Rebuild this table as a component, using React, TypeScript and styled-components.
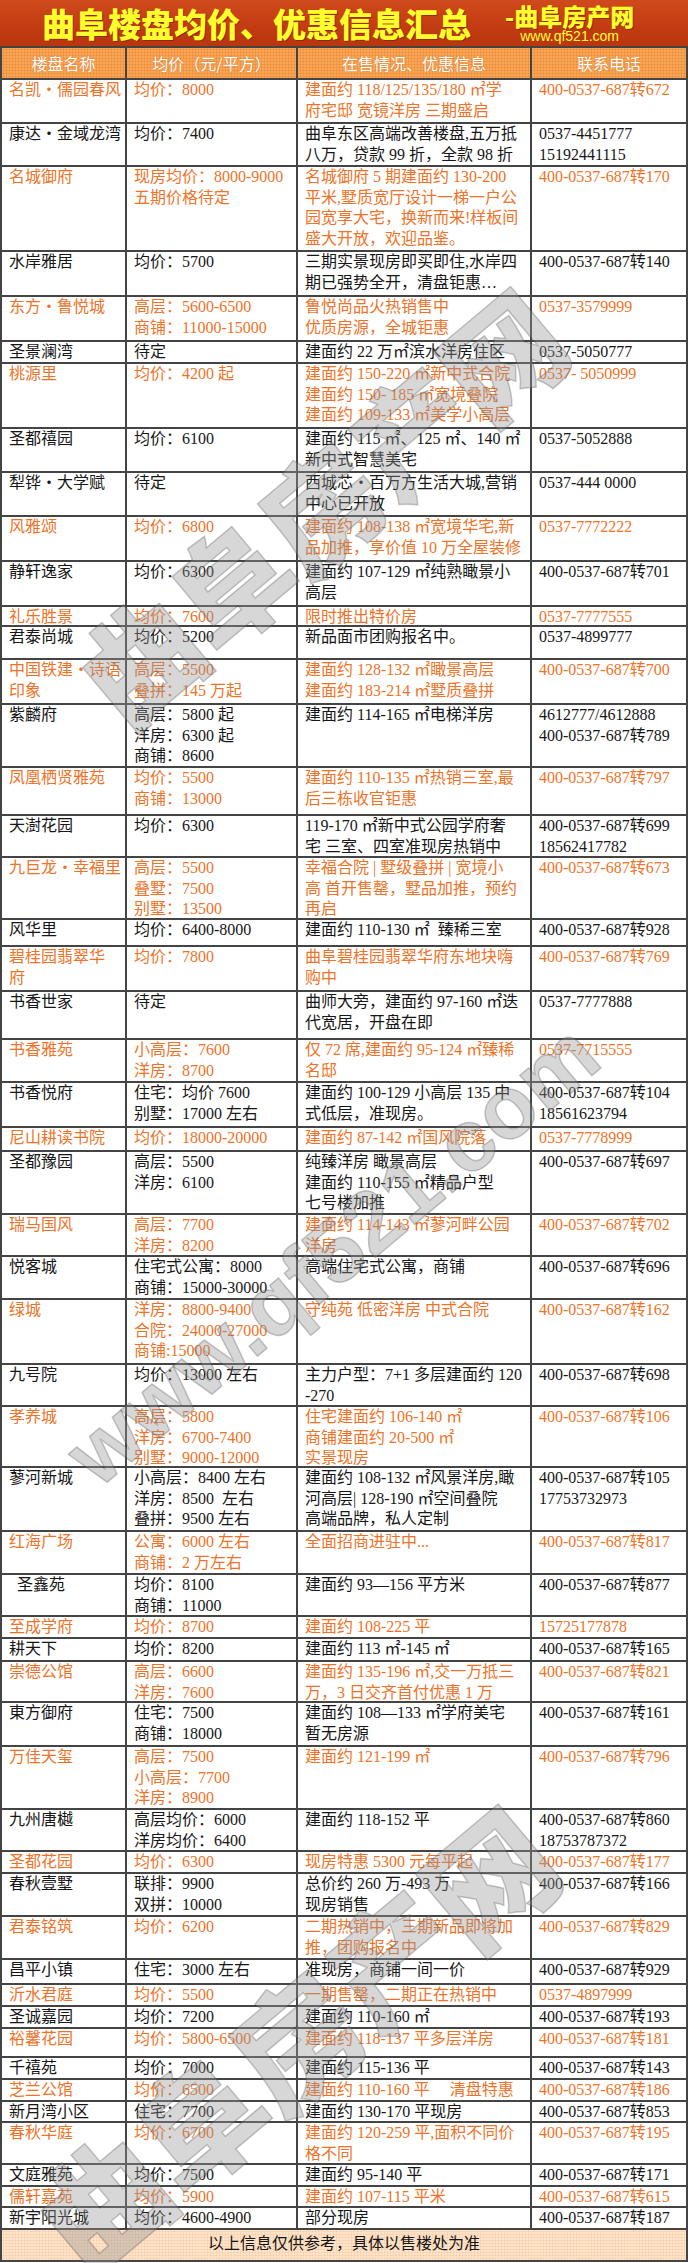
import React from "react";
import styled, { createGlobalStyle } from "styled-components";

const COLS = "125px 171px 234px 156px";
const LINE = "#444";
const ORANGE = "#ee7328";
const INK = "#161616";

type Tone = "o" | "k";
type Listing = [Tone, number, string, string, string, string];

// tone, row height, name, price, info, phone ("\n" splits lines)
const LISTINGS: Listing[] = [
  ["o", 44, "名凯・儒园春风", "均价：8000", "建面约 118/125/135/180 ㎡学\n府宅邸 宽镜洋房 三期盛启", "400-0537-687转672"],
  ["k", 43, "康达・金域龙湾", "均价：7400", "曲阜东区高端改善楼盘,五万抵\n八万，贷款 99 折，全款 98 折", "0537-4451777\n15192441115"],
  ["o", 85, "名城御府", "现房均价：8000-9000\n五期价格待定", "名城御府 5 期建面约 130-200\n平米,墅质宽厅设计一梯一户公\n园宽享大宅，换新而来!样板间\n盛大开放，欢迎品鉴。", "400-0537-687转170"],
  ["k", 45, "水岸雅居", "均价：5700", "三期实景现房即买即住,水岸四\n期已强势全开，清盘钜惠…", "400-0537-687转140"],
  ["o", 45, "东方・鲁悦城", "高层：5600-6500\n商铺：11000-15000", "鲁悦尚品火热销售中\n优质房源，全城钜惠", "0537-3579999"],
  ["k", 22, "圣景澜湾", "待定", "建面约 22 万㎡滨水洋房住区", "0537-5050777"],
  ["o", 65, "桃源里", "均价：4200 起", "建面约 150-220 ㎡新中式合院\n建面约 150- 185 ㎡宽境叠院\n建面约 109-133 ㎡美学小高层", "0537- 5050999"],
  ["k", 44, "圣都禧园", "均价：6100", "建面约 115 ㎡、125 ㎡、140 ㎡\n新中式智慧美宅", "0537-5052888"],
  ["k", 44, "犁铧・大学赋", "待定", "西城芯・百万方生活大城,营销\n中心已开放", "0537-444 0000"],
  ["o", 45, "风雅颂", "均价：6800", "建面约 108-138 ㎡宽境华宅,新\n品加推，享价值 10 万全屋装修", "0537-7772222"],
  ["k", 45, "静轩逸家", "均价：6300", "建面约 107-129 ㎡纯熟瞰景小\n高层", "400-0537-687转701"],
  ["o", 20, "礼乐胜景", "均价：7600", "限时推出特价房", "0537-7777555"],
  ["k", 33, "君泰尚城", "均价：5200", "新品面市团购报名中。", "0537-4899777"],
  ["o", 45, "中国铁建・诗语\n印象", "高层：5500\n叠拼：145 万起", "建面约 128-132 ㎡瞰景高层\n建面约 183-214 ㎡墅质叠拼", "400-0537-687转700"],
  ["k", 63, "紫麟府", "高层：5800 起\n洋房：6300 起\n商铺：8600", "建面约 114-165 ㎡电梯洋房", "4612777/4612888\n400-0537-687转789"],
  ["o", 48, "凤凰栖贤雅苑", "均价：5500\n商铺：13000", "建面约 110-135 ㎡热销三室,最\n后三栋收官钜惠", "400-0537-687转797"],
  ["k", 42, "天澍花园", "均价：6300", "119-170 ㎡新中式公园学府奢\n宅 三室、四室准现房热销中", "400-0537-687转699\n18562417782"],
  ["o", 62, "九巨龙・幸福里", "高层：5500\n叠墅：7500\n别墅：13500", "幸福合院 | 墅级叠拼 | 宽境小\n高 首开售罄，墅品加推，预约\n再启", "400-0537-687转673"],
  ["k", 27, "风华里", "均价：6400-8000", "建面约 110-130 ㎡  臻稀三室", "400-0537-687转928"],
  ["o", 45, "碧桂园翡翠华\n府", "均价：7800", "曲阜碧桂园翡翠华府东地块嗨\n购中", "400-0537-687转769"],
  ["k", 48, "书香世家", "待定", "曲师大旁，建面约 97-160 ㎡迭\n代宽居，开盘在即", "0537-7777888"],
  ["o", 43, "书香雅苑", "小高层：7600\n洋房：8700", "仅 72 席,建面约 95-124 ㎡臻稀\n名邸", "0537-7715555"],
  ["k", 45, "书香悦府", "住宅：均价 7600\n别墅：17000 左右", "建面约 100-129 小高层 135 中\n式低层，准现房。", "400-0537-687转104\n18561623794"],
  ["o", 24, "尼山耕读书院", "均价：18000-20000", "建面约 87-142 ㎡国风院落", "0537-7778999"],
  ["k", 63, "圣都豫园", "高层：5500\n洋房：6100", "纯臻洋房 瞰景高层\n建面约 110-155 ㎡精品户型\n七号楼加推", "400-0537-687转697"],
  ["o", 42, "瑞马国风", "高层：7700\n洋房：8200", "建面约 114-143 ㎡蓼河畔公园\n洋房", "400-0537-687转702"],
  ["k", 43, "悦客城", "住宅式公寓：8000\n商铺：15000-30000", "高端住宅式公寓，商铺", "400-0537-687转696"],
  ["o", 65, "绿城", "洋房：8800-9400\n合院：24000-27000\n商铺:15000", "守纯苑 低密洋房 中式合院", "400-0537-687转162"],
  ["k", 42, "九号院", "均价：13000 左右", "主力户型：7+1 多层建面约 120\n-270", "400-0537-687转698"],
  ["o", 61, "孝养城", "高层：5800\n洋房：6700-7400\n别墅：9000-12000", "住宅建面约 106-140 ㎡\n商铺建面约 20-500 ㎡\n实景现房", "400-0537-687转106"],
  ["k", 64, "蓼河新城", "小高层：8400 左右\n洋房：8500  左右\n叠拼：9500 左右", "建面约 108-132 ㎡风景洋房,瞰\n河高层| 128-190 ㎡空间叠院\n高端品牌，私人定制", "400-0537-687转105\n17753732973"],
  ["o", 43, "红海广场", "公寓：6000 左右\n商铺：2 万左右", "全面招商进驻中...", "400-0537-687转817"],
  ["k", 42, "  圣鑫苑", "均价：8100\n商铺：11000", "建面约 93—156 平方米", "400-0537-687转877"],
  ["o", 22, "至成学府", "均价：8700", "建面约 108-225 平", "15725177878"],
  ["k", 23, "耕天下", "均价：8200", "建面约 113 ㎡-145 ㎡", "400-0537-687转165"],
  ["o", 41, "崇德公馆", "高层：6600\n洋房：7600", "建面约 135-196 ㎡,交一万抵三\n万，3 日交齐首付优惠 1 万", "400-0537-687转821"],
  ["k", 44, "東方御府", "住宅：7500\n商铺：18000", "建面约 108—133 ㎡学府美宅\n暂无房源", "400-0537-687转161"],
  ["o", 63, "万佳天玺", "高层：7500\n小高层：7700\n洋房：8900", "建面约 121-199 ㎡", "400-0537-687转796"],
  ["k", 42, "九州唐樾", "高层均价：6000\n洋房均价：6400", "建面约 118-152 平", "400-0537-687转860\n18753787372"],
  ["o", 22, "圣都花园", "均价：6300", "现房特惠 5300 元每平起", "400-0537-687转177"],
  ["k", 43, "春秋壹墅", "联排：9900\n双拼：10000", "总价约 260 万-493 万\n现房销售", "400-0537-687转166"],
  ["o", 43, "君泰铭筑", "均价：6200", "二期热销中，三期新品即将加\n推，团购报名中", "400-0537-687转829"],
  ["k", 25, "昌平小镇", "住宅：3000 左右", "准现房，商铺一间一价", "400-0537-687转929"],
  ["o", 22, "沂水君庭", "均价：5500", "一期售罄，二期正在热销中", "0537-4897999"],
  ["k", 22, "圣诚嘉园", "均价：7200", "建面约 110-160 ㎡", "400-0537-687转193"],
  ["o", 29, "裕馨花园", "均价：5800-6500", "建面约 118-137 平多层洋房", "400-0537-687转181"],
  ["k", 22, "千禧苑", "均价：7000", "建面约 115-136 平", "400-0537-687转143"],
  ["o", 22, "芝兰公馆", "均价：6500", "建面约 110-160 平　 清盘特惠", "400-0537-687转186"],
  ["k", 21, "新月湾小区", "住宅：7700", "建面约 130-170 平现房", "400-0537-687转853"],
  ["o", 42, "春秋华庭", "均价：6700", "建面约 120-259 平,面积不同价\n格不同", "400-0537-687转195"],
  ["k", 22, "文庭雅苑", "均价：7500", "建面约 95-140 平", "400-0537-687转171"],
  ["o", 21, "儒轩嘉苑", "均价：5900", "建面约 107-115 平米", "400-0537-687转615"],
  ["k", 22, "新宇阳光城", "均价：4600-4900", "部分现房", "400-0537-687转187"],
];

const HEADINGS = ["楼盘名称", "均价（元/平方）", "在售情况、优惠信息", "联系电话"];

const GlobalStyle = createGlobalStyle`
  html, body {
    margin: 0;
    padding: 0;
    background: #ffffff;
  }
  body {
    width: 688px;
    font-family: "Liberation Serif", "Noto Sans CJK SC", serif;
  }
`;

const Page = styled.div`
  position: relative;
  width: 688px;
  height: 2263px;
  overflow: hidden;
  background: #ffffff;
`;

const Banner = styled.div`
  height: 46px;
  display: flex;
  align-items: center;
  padding-left: 42px;
  background: linear-gradient(#cf4a1c, #c23b12 60%, #b9360f);
  color: #ffff2e;
`;

const BannerTitle = styled.div`
  font-family: "Noto Sans CJK SC", sans-serif;
  font-size: 33px;
  font-weight: 900;
  line-height: 46px;
  white-space: nowrap;
  text-shadow: 1px 1px 0 rgba(120, 30, 0, 0.6);
`;

const Brand = styled.div`
  margin-left: 34px;
  display: flex;
  flex-direction: column;
  align-items: center;
`;

const BrandName = styled.div`
  font-family: "Noto Sans CJK SC", sans-serif;
  font-size: 24px;
  font-weight: 900;
  line-height: 26px;
  white-space: nowrap;
  text-shadow: 1px 1px 0 rgba(120, 30, 0, 0.6);
`;

const BrandUrl = styled.div`
  font-family: "Liberation Sans", sans-serif;
  font-size: 14px;
  line-height: 14px;
`;

const Table = styled.div`
  border-top: 2px solid ${LINE};
  border-left: 2px solid ${LINE};
`;

const dotted = (base: string, dot: string) => `
  background-color: ${base};
  background-image: radial-gradient(${dot} 0.8px, transparent 1.2px);
  background-size: 3px 3px;
`;

const HeaderRow = styled.div`
  display: grid;
  grid-template-columns: ${COLS};
  height: 32px;
  ${dotted("#f7a658", "rgba(232, 120, 30, 0.55)")}
`;

const HeaderCell = styled.div`
  display: flex;
  align-items: center;
  justify-content: center;
  border-right: 2px solid ${LINE};
  border-bottom: 2px solid ${LINE};
  font-family: "Noto Sans CJK SC", sans-serif;
  font-size: 16px;
  color: #ffffff;
  text-shadow: 0 0 1px rgba(150, 70, 10, 0.6);
  white-space: nowrap;
`;

const Row = styled.div<{ $h: number }>`
  display: grid;
  grid-template-columns: ${COLS};
  height: ${(p) => p.$h}px;
`;

const Cell = styled.div<{ $tone: Tone }>`
  min-height: 0;
  border-right: 2px solid ${LINE};
  border-bottom: 2px solid ${LINE};
  padding: 0 2px 0 7px;
  font-size: 16px;
  line-height: 20.6px;
  color: ${(p) => (p.$tone === "o" ? ORANGE : INK)};
`;

const Line = styled.div`
  white-space: pre;
`;

const Footer = styled.div`
  height: 32px;
  box-sizing: border-box;
  padding-top: 1px;
  border-right: 2px solid ${LINE};
  border-bottom: 2px solid ${LINE};
  text-align: center;
  font-family: "Noto Sans CJK SC", sans-serif;
  font-size: 16px;
  line-height: 22px;
  color: ${INK};
  ${dotted("#fde4cc", "rgba(245, 180, 120, 0.45)")}
`;

const Watermark = styled.div<{ $x: number; $y: number; $size: number; $pivot: number; $latin?: boolean }>`
  position: absolute;
  left: ${(p) => p.$x - p.$pivot}px;
  top: ${(p) => p.$y - p.$size / 2}px;
  font-family: ${(p) => (p.$latin ? '"Liberation Sans", sans-serif' : '"Noto Sans CJK SC", sans-serif')};
  font-size: ${(p) => p.$size}px;
  font-weight: 900;
  line-height: ${(p) => p.$size}px;
  white-space: nowrap;
  color: rgba(150, 150, 150, 0.38);
  -webkit-text-stroke: 1.5px rgba(80, 80, 80, 0.3);
  transform-origin: ${(p) => p.$pivot}px ${(p) => p.$size / 2}px;
  transform: rotate(-40deg);
  pointer-events: none;
`;

const Lines: React.FC<{ text: string }> = ({ text }) => (
  <>
    {text.split("\n").map((line, i) => (
      <Line key={i}>{line}</Line>
    ))}
  </>
);

export default function App() {
  return (
    <>
      <GlobalStyle />
      <Page>
        <Banner>
          <BannerTitle>曲阜楼盘均价、优惠信息汇总</BannerTitle>
          <Brand>
            <BrandName>-曲阜房产网</BrandName>
            <BrandUrl>www.qf521.com</BrandUrl>
          </Brand>
        </Banner>
        <Table>
          <HeaderRow>
            {HEADINGS.map((h) => (
              <HeaderCell key={h}>{h}</HeaderCell>
            ))}
          </HeaderRow>
          {LISTINGS.map(([tone, h, name, price, info, phone]) => (
            <Row key={name} $h={h}>
              <Cell $tone={tone}>
                <Lines text={name} />
              </Cell>
              <Cell $tone={tone}>
                <Lines text={price} />
              </Cell>
              <Cell $tone={tone}>
                <Lines text={info} />
              </Cell>
              <Cell $tone={tone}>
                <Lines text={phone} />
              </Cell>
            </Row>
          ))}
          <Footer>以上信息仅供参考，具体以售楼处为准</Footer>
        </Table>
        <Watermark $x={138} $y={656} $size={118} $pivot={59}>
          曲阜房产网
        </Watermark>
        <Watermark $x={105} $y={1445} $size={88} $pivot={34} $latin>
          www.qf521.com
        </Watermark>
        <Watermark $x={100} $y={2198} $size={126} $pivot={63}>
          曲阜房产网
        </Watermark>
      </Page>
    </>
  );
}
